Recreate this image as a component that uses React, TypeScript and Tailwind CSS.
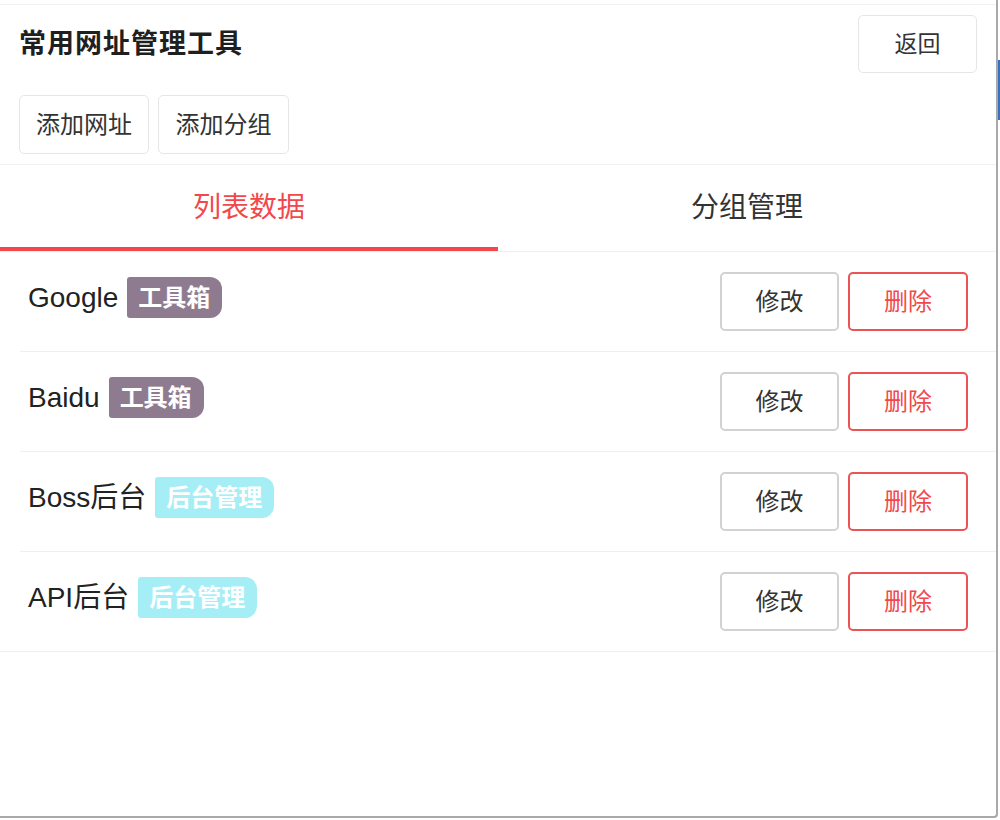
import React from "react";

const items = [
  { name: "Google", tag: "工具箱", kind: "tool" },
  { name: "Baidu", tag: "工具箱", kind: "tool" },
  { name: "Boss后台", tag: "后台管理", kind: "admin" },
  { name: "API后台", tag: "后台管理", kind: "admin" },
];

export default function App() {
  return (
    <div
      className="w-[1000px] h-[820px] bg-white relative overflow-hidden"
      style={{ fontFamily: '"Liberation Sans", "Noto Sans CJK SC", sans-serif' }}
    >
      <div className="w-[998px] h-[818px] bg-white border-r-2 border-b-2 border-[#a9a9a9] rounded-br-[4px] flex flex-col">
        <div className="h-[4px]" />
        <div className="border-t border-[#f0f0f0] border-b flex flex-col pl-[19px] pr-[19px] pt-[10px] pb-[10px]">
          <div className="flex items-center justify-between">
            <div className="text-[27px] font-bold text-[#1f1f1f] leading-none tracking-[1px]">常用网址管理工具</div>
            <button className="w-[119px] h-[58px] border border-[#e6e6e6] rounded-[5px] text-[23px] text-[#333] bg-white">
              返回
            </button>
          </div>
          <div className="flex gap-[9px] mt-[22px]">
            <button className="w-[130px] h-[59px] border border-[#e6e6e6] rounded-[5px] text-[24px] text-[#333] bg-white">
              添加网址
            </button>
            <button className="w-[131px] h-[59px] border border-[#e6e6e6] rounded-[5px] text-[24px] text-[#333] bg-white">
              添加分组
            </button>
          </div>
        </div>
        <div className="flex h-[87px] border-b border-[#efefef]">
          <div className="w-[498px] flex flex-col">
            <div className="flex-1 flex items-center justify-center text-[28px] text-[#f2484b] pt-[4px]">列表数据</div>
            <div className="h-[4px] bg-[#f2484b]" />
          </div>
          <div className="flex-1 flex flex-col">
            <div className="flex-1 flex items-center justify-center text-[28px] text-[#333] pt-[4px]">分组管理</div>
            <div className="h-[4px]" />
          </div>
        </div>
        <div className="flex flex-col">
          {items.map((it, i) => {
            const last = i === items.length - 1;
            return (
              <div
                key={it.name}
                className={
                  last
                    ? "h-[100px] border-b border-[#efefef] flex items-center justify-between pl-[28px] pr-[28px]"
                    : "h-[100px] ml-[20px] border-b border-[#efefef] flex items-center justify-between pl-[8px] pr-[28px]"
                }
              >
                <div className="flex items-center gap-[9px] -mt-[8px]">
                  <span className="text-[28px] text-[#222]">{it.name}</span>
                  <span
                    className={
                      it.kind === "tool"
                        ? "h-[41px] flex items-center pl-[11px] pr-[12px] rounded-l-[3px] rounded-r-[12px] bg-[#8f7b8f] text-white font-bold text-[24px]"
                        : "h-[41px] flex items-center pl-[11px] pr-[12px] rounded-l-[3px] rounded-r-[12px] bg-[#a6eef6] text-white font-bold text-[24px]"
                    }
                  >
                    {it.tag}
                  </span>
                </div>
                <div className="flex gap-[9px]">
                  <button className="w-[119px] h-[59px] border-2 border-[#d2d2d2] rounded-[5px] text-[24px] text-[#333] bg-white">
                    修改
                  </button>
                  <button className="w-[120px] h-[59px] border-2 border-[#ec5353] rounded-[5px] text-[24px] text-[#f2484b] bg-white">
                    删除
                  </button>
                </div>
              </div>
            );
          })}
        </div>
      </div>
      <div className="absolute right-0 top-[60px] w-[2px] h-[60px] bg-[#3a6fc4]" />
    </div>
  );
}
